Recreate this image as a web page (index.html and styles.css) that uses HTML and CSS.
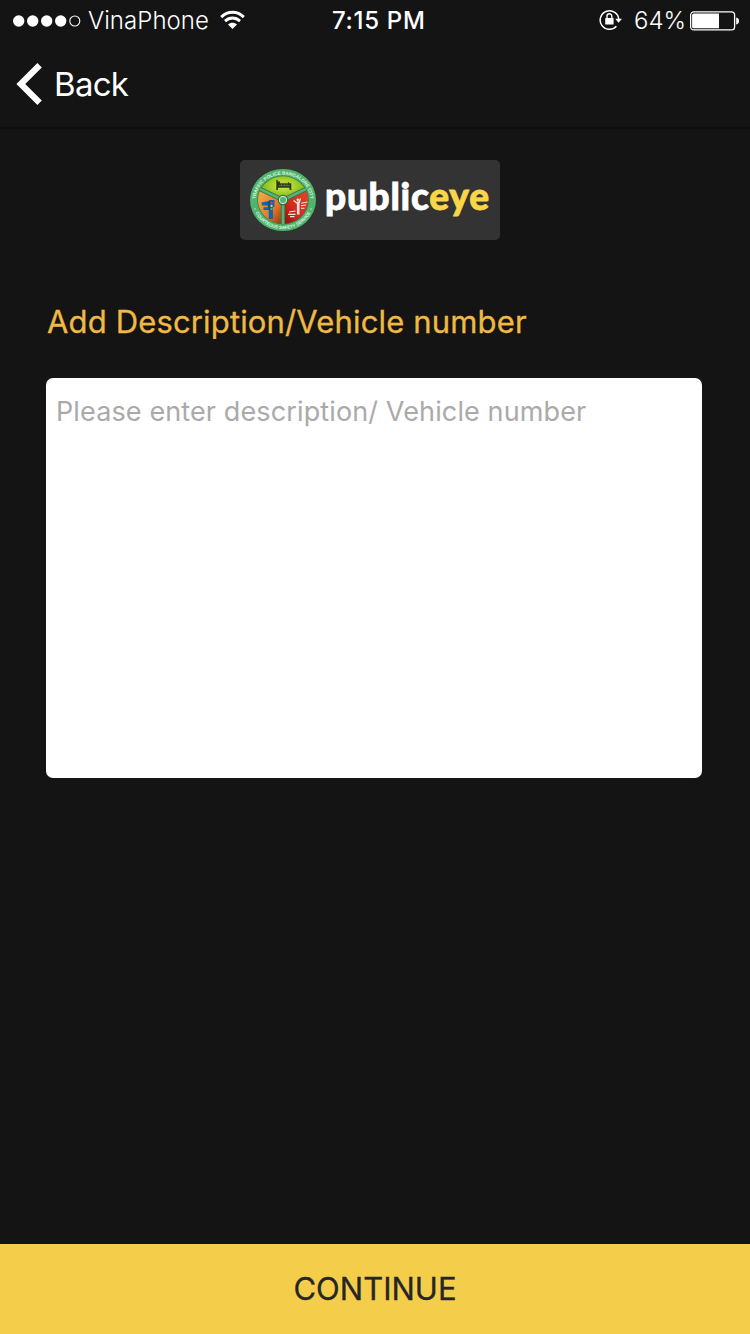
FILE: index.html
```html
<!DOCTYPE html>
<html lang="en">
<head>
<meta charset="utf-8">
<title>Add Description</title>
<link rel="stylesheet" href="styles.css">
</head>
<body>
<div class="screen">
  <header class="status">
    <div class="status-left">
      <svg class="signal" width="68" height="12" viewBox="0 0 68 12" fill="#fff">
        <circle cx="5.7" cy="6" r="5.7"/><circle cx="19.7" cy="6" r="5.7"/><circle cx="33.7" cy="6" r="5.7"/><circle cx="47.7" cy="6" r="5.7"/>
        <circle cx="61.8" cy="6" r="5" fill="none" stroke="#fff" stroke-width="1.1"/>
      </svg>
      <span class="carrier">VinaPhone</span>
      <svg class="wifi" width="26" height="20" viewBox="0 0 26 20" fill="none" stroke="#fff" stroke-width="2.9">
        <path d="M1.2 7.1C7.8 .6 17.2 .6 23.8 7.1"/>
        <path d="M5 11.1C9.5 7 15.5 7 20 11.1"/>
        <path d="M12.5 18.9L8 14.4C10.6 12.1 14.4 12.1 17 14.4Z" fill="#fff" stroke="none"/>
      </svg>
    </div>
    <span class="clock">7:15 PM</span>
    <div class="status-right">
      <svg class="lock" width="24" height="22" viewBox="0 0 24 22">
        <path d="M17.4 17.3A9.3 9.3 0 1 1 19.8 10.5" fill="none" stroke="#fff" stroke-width="1.5"/>
        <path d="M16.2 9.8H23L19.6 13.8Z" fill="#fff"/>
        <rect x="6.2" y="8.9" width="8.4" height="6.6" rx=".6" fill="#fff"/>
        <path d="M8 9V7.2a2.4 2.4 0 0 1 4.8 0V9" fill="none" stroke="#fff" stroke-width="1.4"/>
      </svg>
      <span class="percent">64%</span>
      <svg class="battery" width="50" height="20" viewBox="0 0 50 20">
        <rect x=".6" y=".9" width="44" height="18" rx="3.2" fill="none" stroke="#fff" stroke-width="1.3"/>
        <path d="M3.7 2.5H29V17.3H3.7a1.6 1.6 0 0 1-1.6-1.6V4.1A1.6 1.6 0 0 1 3.7 2.5Z" fill="#fff"/>
        <path d="M46.2 6.4C50 7.1 50 12.7 46.2 13.4Z" fill="#fff"/>
      </svg>
    </div>
  </header>

  <nav class="nav">
    <svg class="chevron" width="26" height="42" viewBox="0 0 26 42" fill="none" stroke="#fff" stroke-width="6.2"><path d="M23.6 2.2L4.8 21L23.6 39.8"/></svg>
    <span class="back">Back</span>
  </nav>

  <main class="content">
    <div class="logo">
      <svg class="emblem" width="66" height="62" viewBox="0 0 66 62" preserveAspectRatio="none">
        <defs>
          <radialGradient id="lime" cx=".5" cy=".4" r=".7"><stop offset="0" stop-color="#d6ef3c"/><stop offset="1" stop-color="#62a010"/></radialGradient>
          <linearGradient id="orange" x1="0" y1="0" x2="1" y2="1"><stop offset="0" stop-color="#f3b247"/><stop offset=".6" stop-color="#e27a25"/><stop offset="1" stop-color="#8f3212"/></linearGradient>
          <linearGradient id="red" x1="1" y1="0" x2="0" y2="1"><stop offset="0" stop-color="#e8452c"/><stop offset=".6" stop-color="#cf281d"/><stop offset="1" stop-color="#86100c"/></linearGradient>
          <path id="arc-top" d="M6 37A27.6 26 0 1 1 60 37"/>
          <path id="arc-bottom" d="M3.2 37A30.4 28.8 0 0 0 62.8 37"/>
        </defs>
        <ellipse cx="33" cy="31" rx="33" ry="31" fill="#4fb56c"/>
        <ellipse cx="33" cy="31" rx="25.8" ry="24.4" fill="#2d8049"/>
        <path d="M33 31L10.6 20.5A25 23.7 0 0 1 55.4 20.5Z" fill="url(#lime)"/>
        <path d="M33 31V54.7A25 23.7 0 0 1 10.6 20.5Z" fill="url(#orange)"/>
        <path d="M33 31V54.7A25 23.7 0 0 0 55.4 20.5Z" fill="url(#red)"/>
        <path d="M33 31V55M33 31L10 20M33 31L56 20" fill="none" stroke="#2c774a" stroke-width="4.2"/>
        <path d="M33 31V55M33 31L10 20M33 31L56 20" fill="none" stroke="#58b276" stroke-width="2.6"/>
        <circle cx="33" cy="31" r="5.2" fill="#237243"/>
        <circle cx="33" cy="31" r="3.7" fill="#57b476" stroke="#d6eedc" stroke-width="1"/>
        <path d="M26.3 11V21H28V18.8H39.5V21H41.3V14.2H39.5L38 12.7V14.2H30V12.4H27.7V11Z" fill="#283b20"/>
        <path d="M29 16.6H40M31.5 13.5V17M34.3 13.5V17M37 13.5V17" stroke="#697d32" stroke-width=".7"/>
        <path d="M11.5 33.5L19 32V31H24.5V38H23V50H18.8V41H13.5V38.3H17.8V36.4H12Z" fill="#1763ab"/>
        <path d="M19 32V41" stroke="#123c72" stroke-width="1"/>
        <circle cx="21.6" cy="33.8" r="1.1" fill="#e6392f"/><circle cx="21.6" cy="36.9" r="1.1" fill="#f7d938"/><circle cx="21.6" cy="40" r="1.1" fill="#42c65b"/>
        <g fill="none" stroke="#f4e4df">
          <path d="M48.2 32.5V45.5" stroke-width="2.6"/>
          <path d="M47.5 34.5L43.6 31.5M49 34L50.5 29.5" stroke-width="1.3"/>
          <path d="M51 34.2L57.5 33M51 36.8L56 36M51 39.2H54.5M39 43L45.5 42M38 45.4H45.5M40 47.6H44.5" stroke-width="1.1"/>
        </g>
        <circle cx="47.8" cy="30.8" r="1.3" fill="#f4e4df"/>
        <circle cx="5" cy="40" r=".7" fill="#dff2e2"/><circle cx="61" cy="40" r=".7" fill="#dff2e2"/>
        <text class="seal-text"><textPath href="#arc-top" startOffset="50%">TRAFFIC POLICE BANGALORE CITY</textPath></text>
        <text class="seal-text seal-motto"><textPath href="#arc-bottom" startOffset="50%">COURTEOUS SAFETY SERVICE</textPath></text>
      </svg>
      <span class="wordmark">public<b>eye</b></span>
    </div>
    <h1 class="title">Add Description/Vehicle number</h1>
    <textarea class="field" placeholder="Please enter description/ Vehicle number"></textarea>
  </main>

  <button class="continue"><span class="continue-label">CONTINUE</span></button>
</div>
</body>
</html>
```
FILE: styles.css
```css
* { box-sizing: border-box; }
body { margin: 0; background: #141414; color: #fff; font-family: Inter, "Open Sans", sans-serif; }
svg { display: block; flex: none; }
.screen { width: 750px; height: 1334px; display: flex; flex-direction: column; background: #141414; overflow: hidden; }

.status { height: 40px; flex: none; display: grid; grid-template-columns: 332px 1fr auto; align-items: center; padding: 0 10px 0 0; font-size: 24px; line-height: 38px; white-space: nowrap; }
.status-left, .status-right { display: flex; align-items: center; height: 40px; }
.carrier, .clock, .percent { padding-top: 2px; }
.signal { margin: 1px 0 0 13px; }
.carrier { margin-left: 7px; width: 120px; letter-spacing: .05px; font-weight: 300; }
.wifi { margin-left: 12px; }
.clock { font-weight: 500; letter-spacing: .7px; }
.percent { width: 50px; margin: 0 6px 0 11px; font-weight: 300; }
.battery { margin-top: 1px; }

.nav { height: 89px; flex: none; display: flex; align-items: center; padding: 0 0 0 16px; border-bottom: 2px solid #0e0e0e; }
.back { margin-left: 12px; font-size: 33px; line-height: 40px; letter-spacing: -.7px; }

.content { flex: 1; display: flex; flex-direction: column; padding: 31px 48px 0 46px; }
.logo { width: 260px; height: 80px; margin-left: 194px; padding: 0 10px; display: flex; align-items: center; border-radius: 5px; background: #333; }
.wordmark { margin-left: 9px; padding-bottom: 8px; font-family: Lato, sans-serif; font-weight: 900; font-size: 37px; line-height: 44px; letter-spacing: .75px; -webkit-text-stroke: .8px currentColor; white-space: nowrap; }
.wordmark b { font-weight: 900; color: #f9d648; }
.seal-text { font-family: "Liberation Sans", sans-serif; font-weight: 700; font-size: 4.6px; text-anchor: middle; fill: #e2f3e4; }
.seal-motto { font-size: 4.4px; }
.title { margin: 62px 0 0 1px; font-size: 31px; line-height: 40px; font-weight: 400; letter-spacing: .15px; color: #f0b944; white-space: nowrap; -webkit-text-stroke: .3px currentColor; }
.field { display: block; width: 656px; height: 400px; margin-top: 36px; padding: 17px 10px; border: 0; border-radius: 7px; background: #fff; font-family: inherit; font-size: 27px; line-height: 34px; letter-spacing: .12px; resize: none; outline: 0; }
.field::placeholder { color: #aaa; opacity: 1; }

.continue { flex: none; height: 90px; padding: 0; border: 0; background: #f4ce4b; color: #262626; font-family: inherit; font-size: 31px; line-height: 40px; -webkit-text-stroke: .3px currentColor; }
```
